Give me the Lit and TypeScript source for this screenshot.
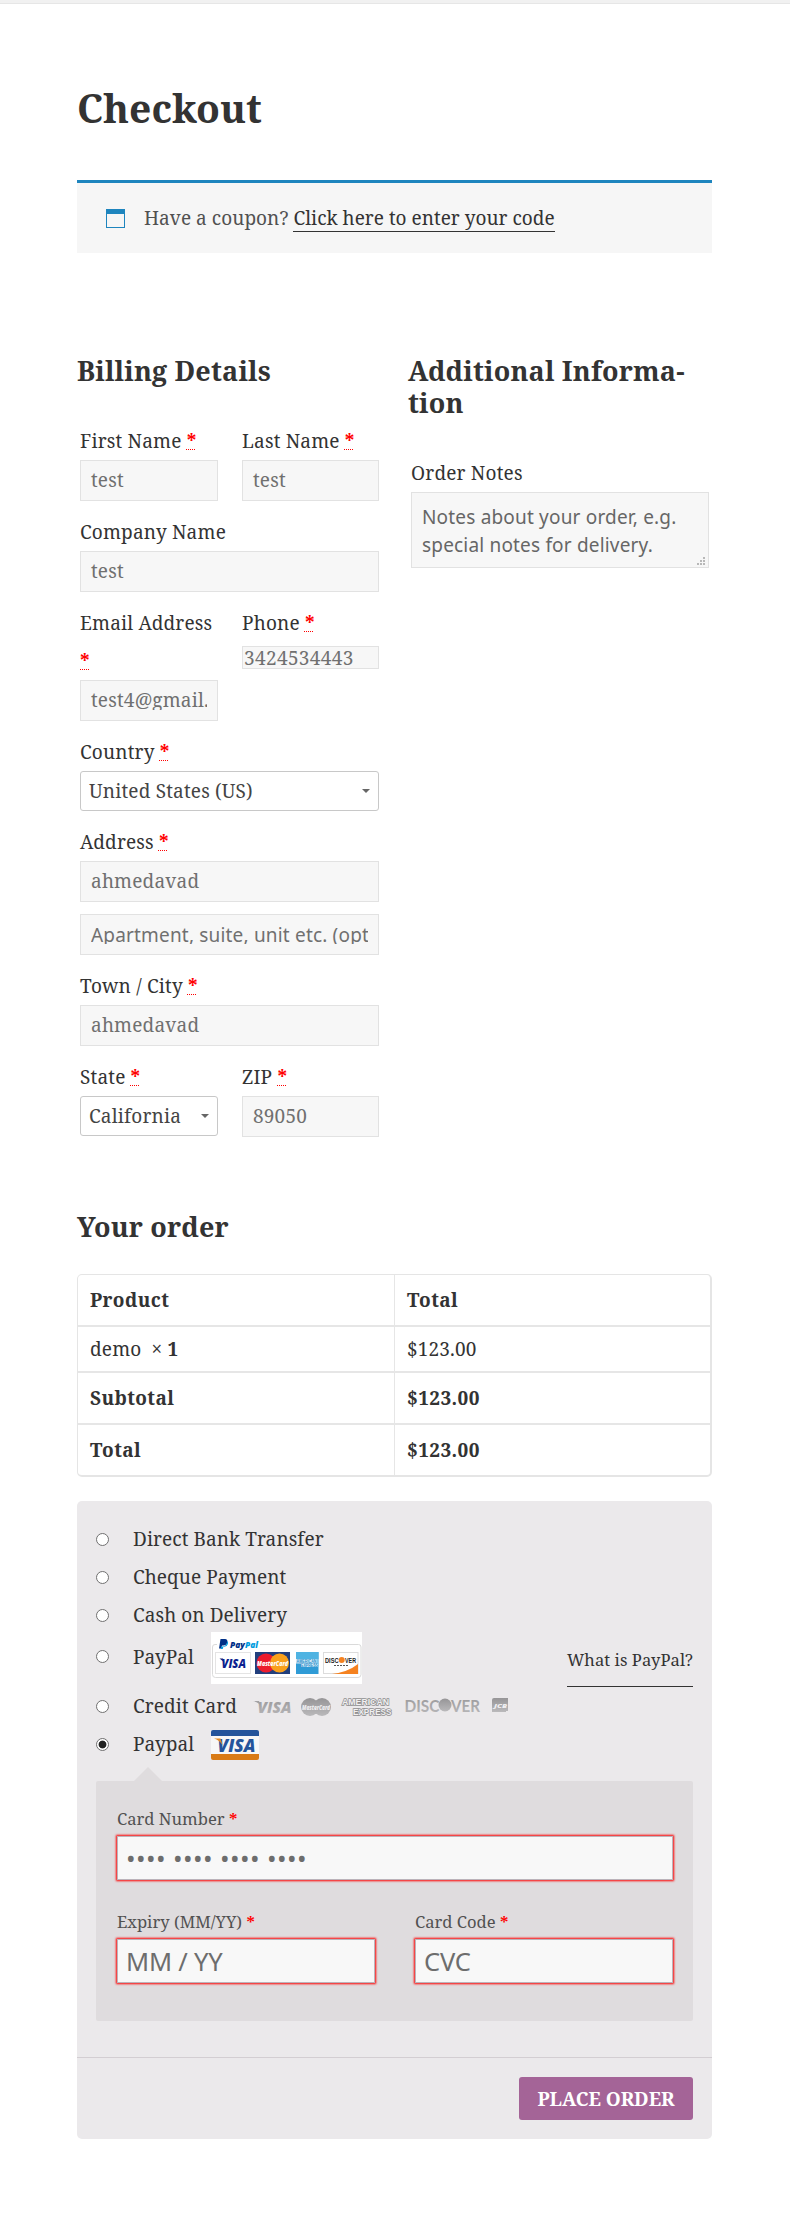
import { LitElement, html, css, svg, nothing } from "lit";
import { customElement, state } from "lit/decorators.js";
import { classMap } from "lit/directives/class-map.js";

const star = html`<abbr class="req" title="required">*</abbr>`;

const paypalMarks = html`<svg class="mark" width="151" height="52" viewBox="0 0 151 52">
  <rect width="151" height="52" fill="#fff" />
  <path d="M6 12.500H4Q1.500 12.500 1.500 15V42.500Q1.500 45.500 4.500 45.500H147Q150 45.500 150 42.500V15Q150 12.500 147.500 12.500H49" fill="none" stroke="#dadada" />
  <path d="M9.500 7h4.500q3 .3 2.300 3.500q-.8 3-4 3h-1.300l-.7 3H8z" fill="#003087" />
  <path d="M16.200 9q1.300 1 .7 3q-.8 2.700-3.700 2.700h-.8l-.7 2.300h-2l.5-2.500h1.500q4.200-.2 4.500-5.500" fill="#009cde" />
  <text x="19" y="15.500" class="m" font-size="9" fill="#003087" textLength="28" lengthAdjust="spacingAndGlyphs">Pay<tspan fill="#009cde">Pal</tspan></text>
  <rect x="4.500" y="20.500" width="35" height="21" fill="#fff" stroke="#e4e4e4" />
  <path d="M8.500 26.500h3.500l1.500 4z" fill="#1a1f71" />
  <text x="10.500" y="35.500" class="m" font-size="12" fill="#0b1f8f" textLength="24.500" lengthAdjust="spacingAndGlyphs">VISA</text>
  <rect x="44" y="20" width="35" height="22" fill="#223f7d" />
  <circle cx="55" cy="31" r="9.500" fill="#ec1c2e" /><circle cx="68.500" cy="31" r="9.500" fill="#f9a01b" />
  <text x="46" y="34" class="m" font-size="7.500" fill="#fff" textLength="31" lengthAdjust="spacingAndGlyphs">MasterCard</text>
  <rect x="85" y="20" width="22.500" height="22" fill="#2f9bd6" /><rect x="85" y="20" width="22.500" height="7" fill="#4fb3e2" />
  <path d="M85 27h21.500v4H107v4H90v-3.500h-5z" fill="#d5ecf8" />
  <text x="85.500" y="31" class="b" font-size="4.500" fill="#2b8fcb" textLength="20" lengthAdjust="spacingAndGlyphs">AMERICAN</text>
  <text x="90" y="35" class="b" font-size="4.500" fill="#2b8fcb" textLength="17" lengthAdjust="spacingAndGlyphs">EXPRESS</text>
  <rect x="112.500" y="20.500" width="34.500" height="21" fill="#fff" stroke="#dcdcdc" />
  <path d="M121 42Q137 40 147 32v10z" fill="#f58220" />
  <circle cx="130.700" cy="28" r="3" fill="#f58220" />
  <text x="114" y="30.700" class="b" font-size="7.500" fill="#222" textLength="13.500" lengthAdjust="spacingAndGlyphs">DISC</text>
  <text x="134" y="30.700" class="b" font-size="7.500" fill="#222" textLength="11" lengthAdjust="spacingAndGlyphs">VER</text>
  <path d="M123 33.500h14" stroke="#555" stroke-dasharray="2 1" />
</svg>`;

const greyMarks = html`<svg class="mark grey" width="256" height="20" viewBox="0 0 256 20">
  <defs><linearGradient id="g" x1="0" y1="0" x2="0" y2="1"><stop offset="0" stop-color="#969597" /><stop offset="1" stop-color="#bab9bb" /></linearGradient></defs>
  <path d="M0 4h6l3 7q-3-6-9-7z" fill="#a3a2a4" />
  <text x="4.500" y="16" class="m" font-size="16" fill="url(#g)" textLength="34" lengthAdjust="spacingAndGlyphs">VISA</text>
  <circle cx="57" cy="10" r="9" fill="url(#g)" /><circle cx="69" cy="10" r="9" fill="url(#g)" />
  <text x="49" y="12.500" class="m" font-size="6.500" fill="#efeef0" textLength="28" lengthAdjust="spacingAndGlyphs">MasterCard</text>
  <text x="89" y="8.300" class="b o" font-size="9.500" textLength="47" lengthAdjust="spacingAndGlyphs">AMERICAN</text>
  <text x="100" y="18" class="b o" font-size="9.500" textLength="38.500" lengthAdjust="spacingAndGlyphs">EXPRESS</text>
  <text x="151.500" y="14.500" class="d" font-size="17.500" fill="url(#g)" textLength="35" lengthAdjust="spacingAndGlyphs">DISC</text>
  <circle cx="192" cy="8" r="6.500" fill="url(#g)" />
  <text x="198" y="14.500" class="d" font-size="17.500" fill="url(#g)" textLength="29" lengthAdjust="spacingAndGlyphs">VER</text>
  <path d="M241 1h14v13h-2v1h-14V3q0-2 2-2z" fill="url(#g)" />
  <text x="241" y="10.500" class="m" font-size="5.500" fill="#f1f0f2" textLength="13" lengthAdjust="spacingAndGlyphs">JCB</text>
</svg>`;

const visaCard = html`<svg class="mark visa" width="48" height="30" viewBox="0 0 48 30">
  <rect width="48" height="30" rx="2" fill="#f7f7f7" />
  <path d="M0 6V2Q0 0 2 0H46Q48 0 48 2V6z" fill="#24549b" />
  <path d="M0 24V28Q0 30 2 30H46Q48 30 48 28V24z" fill="#d97b16" />
  <text x="6.500" y="21.500" class="m" font-size="18" fill="#24549b" textLength="38" lengthAdjust="spacingAndGlyphs">VISA</text>
  <path d="M3 8.500H9.500L11.500 15Q8.500 10 3 8.500z" fill="#e28a25" />
</svg>`;

interface Method { label: string; marks?: unknown; tall?: boolean; link?: string }
const methods: Method[] = [
  { label: "Direct Bank Transfer" },
  { label: "Cheque Payment" },
  { label: "Cash on Delivery" },
  { label: "PayPal", marks: paypalMarks, tall: true, link: "What is PayPal?" },
  { label: "Credit Card", marks: greyMarks },
  { label: "Paypal", marks: visaCard },
];

@customElement("app-root")
export class AppRoot extends LitElement {
  @state() private chosen = 5;

  static styles = css`
    :host { display: block; box-sizing: border-box; height: 2220px; background: #fff; color: #333; font: 19px/32px "Noto Serif", serif; letter-spacing: .1px; overflow: hidden; }
    *, *::before { box-sizing: border-box; }
    .strip { height: 4px; background: #f1f1f1; border-bottom: 1px solid #e6e6e6; }
    .page { width: 635px; margin: 0 0 0 77px; }
    h1 { margin: 0; padding-top: 80px; font-size: 39px; line-height: 48px; letter-spacing: 0; }
    h3 { margin: 0; font-size: 27px; line-height: 32px; letter-spacing: .15px; }
    .notice { display: flex; align-items: center; gap: 19px; height: 73px; margin-top: 48px; padding: 0 29px; background: #f6f6f6; border-top: 3px solid #1e85be; color: #515151; letter-spacing: .05px; }
    .cal { width: 19px; height: 19px; border: 1px solid #1e85be; border-top-width: 5px; }
    .notice a { color: #333; line-height: 25px; border-bottom: 1px solid #333; display: inline-block; letter-spacing: .01px; }
    .cols { display: grid; grid-template-columns: 305px 304px; gap: 26px; margin-top: 102px; }
    .fields { display: grid; grid-template-columns: 138px 137px; column-gap: 24px; row-gap: 12px; padding: 0 3px; margin-top: 35px; align-items: start; letter-spacing: .18px; }
    .notes { grid-template-columns: 298px; }
    .wide { grid-column: 1 / -1; }
    .label { line-height: 38px; display: block; }
    .req { color: #f00; font-weight: 700; text-decoration: underline dotted 1px; text-underline-offset: 1px; text-decoration-skip-ink: none; }
    .input { height: 41px; padding: 10px; border: 1px solid #e2e2e2; background: #f7f7f7; color: #707070; }
    .input span { display: block; height: 19px; line-height: 19px; white-space: nowrap; }
    .input .clip { overflow: hidden; }
    .sans { font-family: "Noto Sans", sans-serif; }
    .input.sans span { line-height: 20px; }
    .second { margin-top: 12px; }
    .phone { height: 23px; padding: 0 1px; line-height: 22px; margin-top: 4px; letter-spacing: .35px; }
    .select { height: 40px; display: flex; justify-content: space-between; align-items: center; padding: 0 8px; border: 1px solid #c8c8c8; border-radius: 3px; color: #444; background: #fff; line-height: 38px; }
    .select::after { content: ""; border: 4px solid transparent; border-top-color: #666; border-bottom: 0; }
    .area { position: relative; height: 76px; padding: 10px 9px 8px 10px; line-height: 28px; border: 1px solid #e2e2e2; background: #f7f7f7; color: #666; }
    .grip { position: absolute; right: 3px; bottom: 2px; }
    .order { margin-top: 74px; }
    .table { display: grid; grid-template-columns: 317px 1fr; grid-template-rows: 52px 46px 52px 50px; height: 203px; margin-top: 31px; border: 1px solid #e5e5e5; border-width: 1px 2px 2px 1px; border-radius: 5px; letter-spacing: .4px; font-weight: 700; }
    .table > div { border-bottom: 2px solid #e6e6e6; padding: 0 12px; display: flex; align-items: center; white-space: pre; }
    .table > div:nth-last-child(-n+2) { border-bottom: 0; }
    .table > div:nth-child(odd) { border-right: 1px solid #e6e6e6; }
    .table .plain { font-weight: 400; letter-spacing: .15px; }
    .pay { height: 638px; margin-top: 24px; background: #ebe9eb; border-radius: 5px; padding: 19px 19px 0; }
    .row { display: flex; align-items: center; height: 38px; }
    .row.tall { height: 53px; padding-bottom: 8px; }
    .radio { flex: none; width: 13px; height: 13px; border: 1px solid #707070; border-radius: 50%; background: #fff; margin-right: 24px; }
    .radio.on { background: radial-gradient(circle, #222 3.500px, #fff 4.300px); }
    .row .name { line-height: 38px; letter-spacing: .07px; }
    .mark { display: block; flex: none; margin-left: 17px; }
    .tall .mark { margin-top: 3px; }
    .grey { margin-left: 16px; margin-top: 1px; }
    .visa { margin-top: 1px; }
    .what { margin-left: auto; font-size: 16.600px; line-height: 28px; height: 41px; border-bottom: 1px solid #333; margin-top: 19px; letter-spacing: .05px; }
    .m { font-family: "Open Sans", sans-serif; font-weight: 800; font-style: italic; letter-spacing: 0; }
    .b { font-family: "Liberation Sans", sans-serif; font-weight: 700; letter-spacing: 0; }
    .d { font-family: Lato, sans-serif; font-weight: 700; letter-spacing: 0; }
    .o { fill: #f1f0f1; stroke: #8f8e90; stroke-width: 1.600px; paint-order: stroke; }
    .box { position: relative; height: 240px; margin-top: 18px; background: #dfdcde; border-radius: 2px; padding: 28px 21px; display: grid; grid-template-columns: 258px 258px; column-gap: 40px; grid-template-rows: 103px 103px; }
    .box::before { content: ""; position: absolute; left: 38px; top: -14px; border: 14px solid transparent; border-top: 0; border-bottom-color: #dfdcde; }
    .box .label { font-size: 16.600px; line-height: 20px; height: 27px; color: #515151; letter-spacing: 0; }
    .box .req { text-decoration: none; }
    .card { height: 44px; border: 1px solid #bbb3ba; background: #f8f8f8; box-shadow: 0 0 2px 1px #f00; color: #6d6d6d; font: 25.500px/40px "Noto Sans", sans-serif; padding: 1px 8px; letter-spacing: -.2px; }
    .dots { letter-spacing: .4px; }
    .foot { margin: 36px -19px 0; border-top: 1px solid #d3ced2; padding: 19px 19px 0; display: flex; justify-content: flex-end; }
    .button { width: 174px; height: 43px; border-radius: 3px; background: #a46497; color: #fff; font-weight: 700; line-height: 44px; text-align: center; letter-spacing: -.05px; }
  `;

  private field(label: string, value: string, wide = false, required = true) {
    return html`<div class=${classMap({ wide })}><span class="label">${label} ${required ? star : nothing}</span><div class="input"><span class=${classMap({ clip: value.includes("@") })}>${value}</span></div></div>`;
  }

  render() {
    return html`
      <div class="strip"></div>
      <div class="page">
        <h1>Checkout</h1>
        <div class="notice"><i class="cal"></i><span>Have a coupon? <a>Click here to enter your code</a></span></div>
        <div class="cols">
          <section>
            <h3>Billing Details</h3>
            <div class="fields">
              ${this.field("First Name", "test")}
              ${this.field("Last Name", "test")}
              ${this.field("Company Name", "test", true, false)}
              ${this.field("Email Address", "test4@gmail.")}
              <div><span class="label">Phone ${star}</span><div class="input phone">3424534443</div></div>
              <div class="wide"><span class="label">Country ${star}</span><div class="select">United States (US)</div></div>
              <div class="wide">
                <span class="label">Address ${star}</span>
                <div class="input"><span>ahmedavad</span></div>
                <div class="input sans second"><span class="clip">Apartment, suite, unit etc. (opt</span></div>
              </div>
              ${this.field("Town / City", "ahmedavad", true)}
              <div><span class="label">State ${star}</span><div class="select">California</div></div>
              ${this.field("ZIP", "89050")}
            </div>
          </section>
          <section>
            <h3>Additional Informa-<br>tion</h3>
            <div class="fields notes">
              <div>
                <span class="label">Order Notes</span>
                <div class="area sans">Notes about your order, e.g. special notes for delivery.
                  <svg class="grip" width="8" height="8">${[[6, 0], [3, 3], [6, 3], [0, 6], [3, 6], [6, 6]].map(([x, y]) => svg`<rect x=${x} y=${y} width="2" height="2" fill="#b8b8b8"/>`)}</svg>
                </div>
              </div>
            </div>
          </section>
        </div>
        <h3 class="order">Your order</h3>
        <div class="table">
          <div>Product</div><div>Total</div>
          <div class="plain">demo  × <b>1</b></div><div class="plain">$123.00</div>
          <div>Subtotal</div><div>$123.00</div>
          <div>Total</div><div>$123.00</div>
        </div>
        <div class="pay">
          ${methods.map((m, i) => html`
            <div class=${classMap({ row: true, tall: !!m.tall })} @click=${() => { this.chosen = i; }}>
              <i class=${classMap({ radio: true, on: i === this.chosen })}></i>
              <span class="name">${m.label}</span>${m.marks ?? nothing}
              ${m.link ? html`<a class="what">${m.link}</a>` : nothing}
            </div>`)}
          <div class="box">
            <div class="wide"><span class="label">Card Number ${star}</span><div class="card dots">•••• •••• •••• ••••</div></div>
            <div><span class="label">Expiry (MM/YY) ${star}</span><div class="card">MM / YY</div></div>
            <div><span class="label">Card Code ${star}</span><div class="card">CVC</div></div>
          </div>
          <div class="foot"><div class="button">PLACE ORDER</div></div>
        </div>
      </div>`;
  }
}
